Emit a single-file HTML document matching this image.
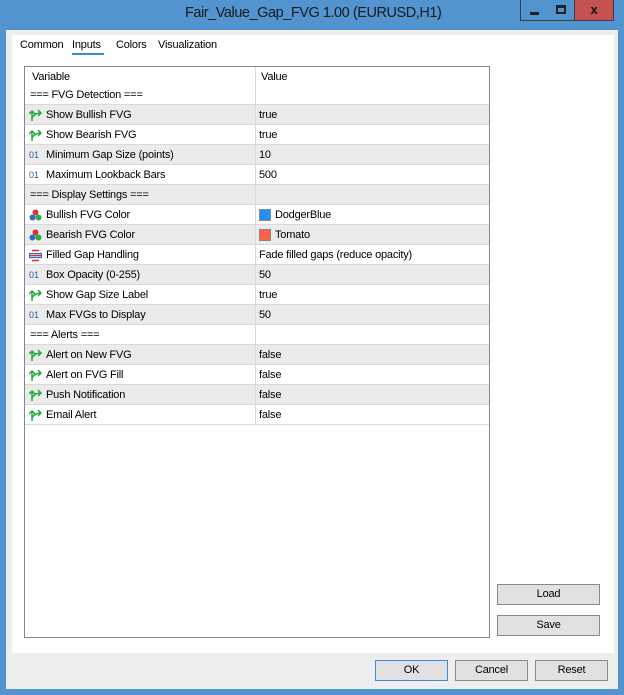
<!DOCTYPE html>
<html><head><style>
*{margin:0;padding:0;box-sizing:border-box}
body{width:624px;height:695px;background:#5294cf;position:relative;overflow:hidden;font-family:"Liberation Sans",sans-serif;font-size:11px;letter-spacing:-0.2px;color:#000}
.title{position:absolute;top:5px;left:185px;width:260px;white-space:nowrap;font-size:14.5px;letter-spacing:-0.45px;color:#1a1a1a}
.wb{position:absolute;top:0;height:21px;border:1px solid #3c3c3c;border-top:none}
.body{position:absolute;left:6px;top:30px;width:612px;height:659px;background:#eeeeee}
.panel{position:absolute;left:12px;top:35px;width:602px;height:618px;background:#fff}
.tab{position:absolute;top:39px}
.tbl{position:absolute;left:24px;top:66px;width:466px;height:572px;border:1px solid #828790;background:#fff}
.row{position:absolute;left:0;width:464px;height:20px;border-bottom:1px solid #d9d9d9}
.row .n{position:absolute;top:4px;left:21px}
.row .n.h{left:5px}
.row .v{position:absolute;top:4px;left:234px}
.row .vl{position:absolute;left:230px;top:0;width:1px;height:20px;background:#d9d9d9}
.g{background:#ebebeb}
.ic{position:absolute;left:4px;top:4px}
.num{position:absolute;left:4px;top:5px;font-size:9px;color:#2a5d9a;letter-spacing:0}
.btn{position:absolute;height:21px;background:#e1e1e1;border:1px solid #8a8a8a;text-align:center;line-height:19px}
.sw{position:absolute;left:234px;top:4px;width:12px;height:12px;border:1px solid #888}
</style></head><body>
<div class="title">Fair_Value_Gap_FVG 1.00 (EURUSD,H1)</div>
<div class="wb" style="left:520px;width:29px;background:#5294cf"><div style="position:absolute;left:9px;top:12px;width:9px;height:3px;background:#222"></div></div>
<div class="wb" style="left:548px;width:27px;background:#5294cf;border-left:none"><div style="position:absolute;left:8px;top:5px;width:10px;height:9px;border:2px solid #222;border-top-width:3px"></div></div>
<div class="wb" style="left:574px;width:40px;background:#c75050;color:#111;font-weight:bold;font-size:13px;text-align:center;line-height:20px">x</div>
<div class="body"></div>
<div class="panel"></div>
<div class="tab" style="left:20px">Common</div>
<div class="tab" style="left:72px">Inputs</div>
<div style="position:absolute;left:72px;top:53px;width:32px;height:2px;background:#3c8ad8"></div>
<div class="tab" style="left:116px">Colors</div>
<div class="tab" style="left:158px">Visualization</div>
<div class="tbl">
<div style="position:absolute;left:230px;top:0;width:1px;height:38px;background:#d9d9d9"></div>
<span style="position:absolute;left:7px;top:4px">Variable</span>
<span style="position:absolute;left:236px;top:4px">Value</span>
<span style="position:absolute;left:5px;top:22px">=== FVG Detection ===</span>
<div style="position:absolute;left:0;top:37px;width:464px;border-bottom:1px solid #d9d9d9"></div>

<div class="row g" style="top:38px"><svg class="ic" width="14" height="13"><path d="M3 12V2M0 5l3-3 3 3M3 9c2-4 5-5 9-5M9 1l3 3-3 3" stroke="#1faa3a" stroke-width="1.5" fill="none"/></svg><span class="n">Show Bullish FVG</span><div class="vl"></div><span class="v">true</span></div>
<div class="row" style="top:58px"><svg class="ic" width="14" height="13"><path d="M3 12V2M0 5l3-3 3 3M3 9c2-4 5-5 9-5M9 1l3 3-3 3" stroke="#1faa3a" stroke-width="1.5" fill="none"/></svg><span class="n">Show Bearish FVG</span><div class="vl"></div><span class="v">true</span></div>
<div class="row g" style="top:78px"><span class="num">01</span><span class="n">Minimum Gap Size (points)</span><div class="vl"></div><span class="v">10</span></div>
<div class="row" style="top:98px"><span class="num">01</span><span class="n">Maximum Lookback Bars</span><div class="vl"></div><span class="v">500</span></div>
<div class="row g" style="top:118px"><span class="n h">=== Display Settings ===</span><div class="vl"></div></div>
<div class="row" style="top:138px"><svg class="ic" width="13" height="13"><circle cx="6.5" cy="3.5" r="3" fill="#e03030"/><circle cx="3.5" cy="8.5" r="3" fill="#2a6fd0"/><circle cx="9.5" cy="8.5" r="3" fill="#28b040"/></svg><span class="n">Bullish FVG Color</span><div class="vl"></div><div class="sw" style="background:#1e90ff"></div><span class="v" style="left:250px">DodgerBlue</span></div>
<div class="row g" style="top:158px"><svg class="ic" width="13" height="13"><circle cx="6.5" cy="3.5" r="3" fill="#e03030"/><circle cx="3.5" cy="8.5" r="3" fill="#2a6fd0"/><circle cx="9.5" cy="8.5" r="3" fill="#28b040"/></svg><span class="n">Bearish FVG Color</span><div class="vl"></div><div class="sw" style="background:#ff6347"></div><span class="v" style="left:250px">Tomato</span></div>
<div class="row" style="top:178px"><svg class="ic" width="13" height="13"><path d="M3 1.5h7M1 6.5h11M3 11.5h7" stroke="#d03030" stroke-width="1.5"/><rect x="0.5" y="4.5" width="12" height="4" fill="none" stroke="#2a6fd0" stroke-width="1.2"/></svg><span class="n">Filled Gap Handling</span><div class="vl"></div><span class="v">Fade filled gaps (reduce opacity)</span></div>
<div class="row g" style="top:198px"><span class="num">01</span><span class="n">Box Opacity (0-255)</span><div class="vl"></div><span class="v">50</span></div>
<div class="row" style="top:218px"><svg class="ic" width="14" height="13"><path d="M3 12V2M0 5l3-3 3 3M3 9c2-4 5-5 9-5M9 1l3 3-3 3" stroke="#1faa3a" stroke-width="1.5" fill="none"/></svg><span class="n">Show Gap Size Label</span><div class="vl"></div><span class="v">true</span></div>
<div class="row g" style="top:238px"><span class="num">01</span><span class="n">Max FVGs to Display</span><div class="vl"></div><span class="v">50</span></div>
<div class="row" style="top:258px"><span class="n h">=== Alerts ===</span><div class="vl"></div></div>
<div class="row g" style="top:278px"><svg class="ic" width="14" height="13"><path d="M3 12V2M0 5l3-3 3 3M3 9c2-4 5-5 9-5M9 1l3 3-3 3" stroke="#1faa3a" stroke-width="1.5" fill="none"/></svg><span class="n">Alert on New FVG</span><div class="vl"></div><span class="v">false</span></div>
<div class="row" style="top:298px"><svg class="ic" width="14" height="13"><path d="M3 12V2M0 5l3-3 3 3M3 9c2-4 5-5 9-5M9 1l3 3-3 3" stroke="#1faa3a" stroke-width="1.5" fill="none"/></svg><span class="n">Alert on FVG Fill</span><div class="vl"></div><span class="v">false</span></div>
<div class="row g" style="top:318px"><svg class="ic" width="14" height="13"><path d="M3 12V2M0 5l3-3 3 3M3 9c2-4 5-5 9-5M9 1l3 3-3 3" stroke="#1faa3a" stroke-width="1.5" fill="none"/></svg><span class="n">Push Notification</span><div class="vl"></div><span class="v">false</span></div>
<div class="row" style="top:338px"><svg class="ic" width="14" height="13"><path d="M3 12V2M0 5l3-3 3 3M3 9c2-4 5-5 9-5M9 1l3 3-3 3" stroke="#1faa3a" stroke-width="1.5" fill="none"/></svg><span class="n">Email Alert</span><div class="vl"></div><span class="v">false</span></div>
</div>
<div class="btn" style="left:497px;top:584px;width:103px">Load</div>
<div class="btn" style="left:497px;top:615px;width:103px">Save</div>
<div class="btn" style="left:375px;top:660px;width:73px;border-color:#3c8ad8">OK</div>
<div class="btn" style="left:455px;top:660px;width:73px">Cancel</div>
<div class="btn" style="left:535px;top:660px;width:73px">Reset</div>
</body></html>
